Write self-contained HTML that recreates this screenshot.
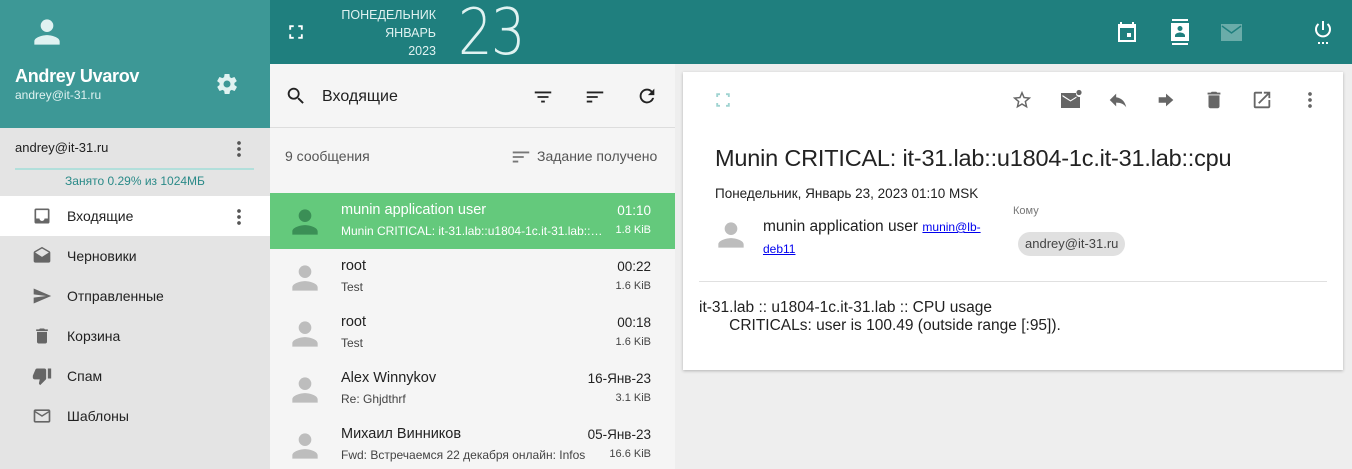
<!DOCTYPE html>
<html><head><meta charset="utf-8"><style>
*{box-sizing:border-box;margin:0;padding:0}
body{width:1352px;height:469px;overflow:hidden;font-family:"Liberation Sans",sans-serif;background:#eeeeee;position:relative;color:#212121}
.abs{position:absolute}
svg{display:block}
</style></head><body>
<div class="abs" style="left:0;top:0;width:1352px;height:64px;background:#1f7f7e"></div>
<div class="abs" style="left:0;top:0;width:270px;height:128px;background:#3d9896"></div>
<svg class="abs" style="left:28px;top:13px" width="38" height="38" viewBox="0 0 24 24"><path fill="#e0f2f1" d="M12 12a4 4 0 1 0 0-8 4 4 0 0 0 0 8zm0 2c-2.7 0-8 1.3-8 4v2h16v-2c0-2.7-5.3-4-8-4z"/></svg>
<div class="abs" style="left:15px;top:66px;color:#fff;font-weight:bold;font-size:18px;letter-spacing:-0.3px">Andrey Uvarov</div>
<div class="abs" style="left:15px;top:88px;color:#e0f2f1;font-size:12px">andrey@it-31.ru</div>
<svg class="abs" style="left:215px;top:72px" width="24" height="24" viewBox="0 0 24 24"><path fill="#e0f2f1" d="M19.4 13c.04-.3.06-.6.06-1s-.02-.7-.06-1l2.1-1.6c.2-.15.25-.4.1-.6l-2-3.5c-.1-.2-.4-.3-.6-.2l-2.5 1c-.5-.4-1.1-.7-1.7-1L14.5 2.4c0-.2-.2-.4-.5-.4h-4c-.25 0-.46.2-.5.4L9.1 5.1c-.6.25-1.2.6-1.700 1l-2.5-1c-.2-.1-.5 0-.6.2l-2 3.5c-.1.2-.1.5.1.6L4.6 11c0 .3-.1.7-.1 1s0 .7.1 1l-2.1 1.6c-.2.15-.25.4-.1.6l2 3.5c.1.2.4.3.6.2l2.5-1c.5.4 1.1.7 1.7 1l.4 2.7c0 .2.2.4.5.4h4c.25 0 .46-.2.5-.4l.4-2.7c.6-.25 1.2-.6 1.7-1l2.5 1c.2.1.5 0 .6-.2l2-3.5c.1-.2.1-.5-.1-.6L19.4 13zM12 15.5a3.5 3.5 0 1 1 0-7 3.5 3.5 0 0 1 0 7z"/></svg>
<div class="abs" style="left:0;top:128px;width:270px;height:341px;background:#e4e4e4"></div>
<div class="abs" style="left:15px;top:140px;font-size:13px">andrey@it-31.ru</div>
<div class="abs" style="left:237px;top:140px;width:4px;height:18px;background:radial-gradient(circle,#555 1.7px,transparent 2px) 0 0/4px 6px"></div>
<div class="abs" style="left:15px;top:168px;width:239px;height:2px;background:#b2dfdb"></div>
<div class="abs" style="left:0;top:174px;width:270px;text-align:center;font-size:12px;color:#2a8a88">Занято 0.29% из 1024МБ</div>
<div class="abs" style="left:0;top:196px;width:270px;height:40px;background:#fff"></div>
<svg class="abs" style="left:32px;top:206px" width="20" height="20" viewBox="0 0 24 24"><path fill="#666" d="M19 3H5a2 2 0 0 0-2 2v14a2 2 0 0 0 2 2h14a2 2 0 0 0 2-2V5a2 2 0 0 0-2-2zm0 12h-4a3 3 0 0 1-6 0H5V5h14v10z"/></svg>
<div class="abs" style="left:67px;top:208px;font-size:14px">Входящие</div>
<div class="abs" style="left:237px;top:208px;width:4px;height:18px;background:radial-gradient(circle,#555 1.7px,transparent 2px) 0 0/4px 6px"></div>
<svg class="abs" style="left:32px;top:246px" width="20" height="20" viewBox="0 0 24 24"><path fill="#666" d="M21.99 8c0-.72-.37-1.35-.94-1.7L12 1 2.95 6.3C2.38 6.65 2 7.28 2 8v10c0 1.1.9 2 2 2h16c1.1 0 2-.9 2-2l-.01-10zM12 13L3.74 7.84 12 3l8.26 4.84L12 13z"/></svg>
<div class="abs" style="left:67px;top:248px;font-size:14px">Черновики</div>
<svg class="abs" style="left:32px;top:286px" width="20" height="20" viewBox="0 0 24 24"><path fill="#666" d="M2 21l21-9L2 3v7l15 2-15 2z"/></svg>
<div class="abs" style="left:67px;top:288px;font-size:14px">Отправленные</div>
<svg class="abs" style="left:32px;top:326px" width="20" height="20" viewBox="0 0 24 24"><path fill="#666" d="M6 19c0 1.1.9 2 2 2h8c1.1 0 2-.9 2-2V7H6v12zM19 4h-3.5l-1-1h-5l-1 1H5v2h14V4z"/></svg>
<div class="abs" style="left:67px;top:328px;font-size:14px">Корзина</div>
<svg class="abs" style="left:32px;top:366px" width="20" height="20" viewBox="0 0 24 24"><path fill="#666" d="M15 3H6c-.83 0-1.54.5-1.84 1.22l-3.02 7.05c-.09.23-.14.47-.14.73v2c0 1.1.9 2 2 2h6.31l-.95 4.57-.03.32c0 .41.17.79.44 1.06L9.83 23l6.59-6.59c.36-.36.58-.86.58-1.41V5c0-1.1-.9-2-2-2zm4 0v12h4V3h-4z"/></svg>
<div class="abs" style="left:67px;top:368px;font-size:14px">Спам</div>
<svg class="abs" style="left:32px;top:406px" width="20" height="20" viewBox="0 0 24 24"><path fill="#666" d="M20 4H4c-1.1 0-2 .9-2 2v12c0 1.1.9 2 2 2h16c1.1 0 2-.9 2-2V6c0-1.1-.9-2-2-2zm0 14H4V8l8 5 8-5v10zm-8-7L4 6h16l-8 5z"/></svg>
<div class="abs" style="left:67px;top:408px;font-size:14px">Шаблоны</div>
<svg class="abs" style="left:287px;top:23px" width="18" height="18" viewBox="0 0 24 24"><path fill="#fff" d="M3 3h6v2.5H5.5V9H3zM15 3h6v6h-2.5V5.5H15zM3 15h2.5v3.5H9V21H3zM18.5 15H21v6h-6v-2.5h3.5z"/></svg>
<div class="abs" style="left:320px;top:6px;width:116px;text-align:right;color:#e0f2f1;font-size:12.5px;line-height:18px">ПОНЕДЕЛЬНИК<br>ЯНВАРЬ<br>2023</div>
<div class="abs" style="left:458px;top:-4px;color:#e0f2f1;font-size:64px;font-weight:100;font-family:'DejaVu Sans',sans-serif;letter-spacing:-2px;transform:scaleX(0.85);transform-origin:left">23</div>
<svg class="abs" style="left:1116px;top:20px" width="22" height="24" viewBox="0 0 22 24"><path fill="#fff" d="M4 2h2v2h10V2h2v2h2v18H2V4h2zM4 8v12h14V8zm7 5h4v4h-4z"/></svg>
<svg class="abs" style="left:1168px;top:19px" width="24" height="26" viewBox="0 0 24 26"><path fill="#fff" d="M4 0h16v2H4zM4 24h16v2H4zM3 4h18v18H3zM12 7a2.5 2.5 0 1 0 0 5 2.5 2.5 0 0 0 0-5zm-5 11h10v-1.5c0-2-3.3-3-5-3s-5 1-5 3z"/></svg>
<div class="abs" style="left:1221px;top:24px;width:21px;height:17px;background:#6aaca9"></div>
<svg class="abs" style="left:1221px;top:24px" width="21" height="17"><path d="M1 2l9.5 7L20 2" stroke="#1f7f7e" stroke-width="1.5" fill="none"/></svg>
<svg class="abs" style="left:1313px;top:19px" width="20" height="26" viewBox="0 0 20 26"><path d="M10 2v9M5.5 5a7 7 0 1 0 9 0" stroke="#fff" stroke-width="2" fill="none"/><path fill="#fff" d="M5 23h2v2H5zm4 0h2v2H9zm4 0h2v2h-2z"/></svg>
<div class="abs" style="left:270px;top:64px;width:405px;height:405px;background:#f5f5f5"></div>
<div class="abs" style="left:270px;top:127px;width:405px;height:1px;background:#ddd"></div>
<svg class="abs" style="left:285px;top:85px" width="22" height="22" viewBox="0 0 24 24"><path fill="#222" d="M15.5 14h-.8l-.3-.3A6.5 6.5 0 1 0 9.5 16a6.5 6.5 0 0 0 4.2-1.6l.3.3v.8l5 5 1.5-1.5zm-6 0a4.5 4.5 0 1 1 0-9 4.5 4.5 0 0 1 0 9z"/></svg>
<div class="abs" style="left:322px;top:88px;font-size:16px">Входящие</div>
<svg class="abs" style="left:532px;top:86px" width="22" height="22" viewBox="0 0 24 24"><path fill="#222" d="M3 6h18v2H3zm3 5h12v2H6zm4 5h4v2h-4z"/></svg>
<svg class="abs" style="left:584px;top:86px" width="22" height="22" viewBox="0 0 24 24"><path fill="#222" d="M3 6h18v2H3zm0 5h12v2H3zm0 5h6v2H3z"/></svg>
<svg class="abs" style="left:636px;top:85px" width="22" height="22" viewBox="0 0 24 24"><path fill="#222" d="M17.65 6.35A7.96 7.96 0 0 0 12 4a8 8 0 1 0 7.73 10h-2.08A6 6 0 1 1 12 6c1.66 0 3.14.69 4.22 1.78L13 11h7V4z"/></svg>
<div class="abs" style="left:285px;top:148px;font-size:14px;color:#555">9 сообщения</div>
<svg class="abs" style="left:510px;top:146px" width="22" height="22" viewBox="0 0 24 24"><path fill="#777" d="M3 6h18v2H3zm0 5h12v2H3zm0 5h6v2H3z"/></svg>
<div class="abs" style="left:537px;top:148px;font-size:14px;color:#555">Задание получено</div>
<div class="abs" style="left:270px;top:193px;width:405px;height:56px;background:#64c97c"></div>
<div id="msgs"></div>
<div class="abs" style="left:683px;top:72px;width:660px;height:298px;background:#fff;box-shadow:0 1px 3px rgba(0,0,0,.25)"></div>
<svg class="abs" style="left:714px;top:91px" width="18" height="18" viewBox="0 0 24 24"><path fill="#9fd3d1" d="M3 3h5v2.5H5.5V8H3zM16 3h5v5h-2.5V5.5H16zM3 16h2.5v2.5H8V21H3zM18.5 16H21v5h-5v-2.5h2.5z"/></svg>
<svg class="abs" style="left:1011px;top:89px" width="22" height="22" viewBox="0 0 24 24"><path fill="#666" d="M22 9.24l-7.19-.62L12 2 9.19 8.630 2 9.24l5.46 4.73L5.82 21 12 17.27 18.18 21l-1.63-7.03L22 9.24zM12 15.4l-3.76 2.27 1-4.28-3.32-2.88 4.38-.38L12 6.1l1.71 4.04 4.38.38-3.32 2.88 1 4.28L12 15.4z"/></svg>
<svg class="abs" style="left:1059px;top:89px" width="24" height="22" viewBox="0 0 24 22"><path fill="#666" d="M2 4h15a3.5 3.5 0 0 0 4 4v11H2zm1.5 2v1.5l8 5 6-3.7V7.5l-6 3.8z"/><circle cx="20" cy="3.5" r="2.6" fill="#666"/></svg>
<svg class="abs" style="left:1107px;top:89px" width="22" height="22" viewBox="0 0 24 24"><path fill="#666" d="M10 9V5l-7 7 7 7v-4.1c5 0 8.5 1.6 11 5.1-1-5-4-10-11-11z"/></svg>
<svg class="abs" style="left:1155px;top:89px" width="22" height="22" viewBox="0 0 24 24"><path fill="#666" d="M12 5v4H4v6h8v4l8-7z"/></svg>
<svg class="abs" style="left:1203px;top:89px" width="22" height="22" viewBox="0 0 24 24"><path fill="#666" d="M6 19c0 1.1.9 2 2 2h8c1.1 0 2-.9 2-2V7H6v12zM19 4h-3.5l-1-1h-5l-1 1H5v2h14V4z"/></svg>
<svg class="abs" style="left:1251px;top:89px" width="22" height="22" viewBox="0 0 24 24"><path fill="#666" d="M19 19H5V5h7V3H5a2 2 0 0 0-2 2v14a2 2 0 0 0 2 2h14c1.1 0 2-.9 2-2v-7h-2v7zM14 3v2h3.59l-9.83 9.83 1.41 1.41L19 6.41V10h2V3h-7z"/></svg>
<div class="abs" style="left:1308px;top:91px;width:4px;height:18px;background:radial-gradient(circle,#666 1.7px,transparent 2px) 0 0/4px 6px"></div>
<div class="abs" style="left:715px;top:145px;font-size:23.5px;color:#222;letter-spacing:-0.2px">Munin CRITICAL: it-31.lab::u1804-1c.it-31.lab::cpu</div>
<div class="abs" style="left:715px;top:186px;font-size:13.5px">Понедельник, Январь 23, 2023 01:10 MSK</div>
<div class="abs" style="left:1013px;top:205px;font-size:11px;color:#777">Кому</div>
<svg class="abs" style="left:712px;top:216px" width="38" height="38" viewBox="0 0 24 24"><path fill="#bdbdbd" d="M12 12a4 4 0 1 0 0-8 4 4 0 0 0 0 8zm0 2c-2.7 0-8 1.3-8 4v2h16v-2c0-2.7-5.3-4-8-4z"/></svg>
<div class="abs" style="left:763px;top:216px;font-size:15.5px;width:240px;line-height:22px">munin application user <a style="color:#00e;font-size:12px;text-decoration:underline">munin@lb-<br>deb11</a></div>
<div class="abs" style="left:1018px;top:232px;height:24px;padding:0 7px;line-height:24px;border-radius:12px;background:#e0e0e0;font-size:13px;color:#444">andrey@it-31.ru</div>
<div class="abs" style="left:699px;top:281px;width:628px;height:1px;background:#e0e0e0"></div>
<div class="abs" style="left:699px;top:299px;font-size:15.5px;line-height:18px;white-space:pre">it-31.lab :: u1804-1c.it-31.lab :: CPU usage
       CRITICALs: user is 100.49 (outside range [:95]).</div>
<script>
var m=[["munin application user","01:10","Munin CRITICAL: it-31.lab::u1804-1c.it-31.lab::cpu","1.8 KiB",1],
["root","00:22","Test","1.6 KiB"],["root","00:18","Test","1.6 KiB"],["Alex Winnykov","16-Янв-23","Re: Ghjdthrf","3.1 KiB"],
["Михаил Винников","05-Янв-23","Fwd: Встречаемся 22 декабря онлайн: Infos","16.6 KiB"]];
var h="";m.forEach(function(r,i){var t=193+i*56;var c=r[4]?"#fff":"#222",c2=r[4]?"#fff":"#444",av=r[4]?"#3b8f56":"#bdbdbd";
h+='<svg class="abs" style="left:286px;top:'+(t+10)+'px" width="38" height="38" viewBox="0 0 24 24"><path fill="'+av+'" d="M12 12a4 4 0 1 0 0-8 4 4 0 0 0 0 8zm0 2c-2.7 0-8 1.3-8 4v2h16v-2c0-2.7-5.3-4-8-4z"/></svg>';
h+='<div class="abs" style="left:341px;top:'+(t+9)+'px;font-size:14.5px;color:'+c+'">'+r[0]+'</div>';
h+='<div class="abs" style="left:540px;width:111px;text-align:right;top:'+(t+10)+'px;font-size:13.5px;color:'+c+'">'+r[1]+'</div>';
h+='<div class="abs" style="left:341px;top:'+(t+31)+'px;font-size:12px;color:'+c2+';width:266px;white-space:nowrap;overflow:hidden;text-overflow:ellipsis">'+r[2]+'</div>';
h+='<div class="abs" style="left:590px;width:61px;text-align:right;top:'+(t+31)+'px;font-size:11px;color:'+c2+'">'+r[3]+'</div>';});
document.getElementById("msgs").innerHTML=h;
</script>
</body></html>
